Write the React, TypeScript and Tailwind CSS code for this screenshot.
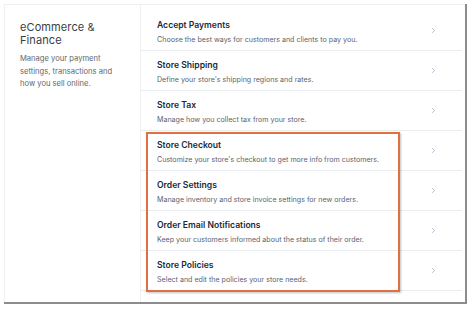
import React from "react";

const rows = [
  ["Accept Payments", "Choose the best ways for customers and clients to pay you."],
  ["Store Shipping", "Define your store's shipping regions and rates."],
  ["Store Tax", "Manage how you collect tax from your store."],
  ["Store Checkout", "Customize your store's checkout to get more info from customers."],
  ["Order Settings", "Manage inventory and store invoice settings for new orders."],
  ["Order Email Notifications", "Keep your customers informed about the status of their order."],
  ["Store Policies", "Select and edit the policies your store needs."],
];

function Chevron() {
  return (
    <svg width="5" height="7" viewBox="0 0 5 7" className="shrink-0">
      <path d="M1.2 1.2 L3.5 3.5 L1.2 5.8" fill="none" stroke="#a9b8c8" strokeWidth="0.9" />
    </svg>
  );
}

export default function App() {
  return (
    <div className="w-[474px] h-[310px] bg-white relative overflow-hidden" style={{ fontFamily: "Inter, 'Noto Sans', sans-serif" }}>
      <div className="absolute left-[4px] top-[4px] w-[463px] h-[300px] bg-white border-r-2 border-b-2 border-[#8c8c8c]">
        <div className="flex h-full border-l border-t border-[#eef1f4]">
          <div className="w-[136px] border-r border-[#eef1f4] pl-[15px] pt-[16px]">
            <div className="text-[11px] leading-[12.5px] text-[#3a3e43] tracking-[0.1px]">eCommerce &amp;<br />Finance</div>
            <div className="mt-[7px] text-[7.6px] leading-[12.5px] text-[#62686e] w-[104px]">
              Manage your payment settings, transactions and how you sell online.
            </div>
          </div>
          <div className="flex-1 pt-[6px] pr-[3px]">
            {rows.map(([t, d]) => (
              <div key={t} className="h-[40px] border-b border-[#e9edf1] flex items-center pl-[16px] pr-[26px]">
                <div className="flex-1 pt-[3px]">
                  <div className="text-[8.6px] leading-[12px] font-semibold text-[#172a3a]">{t}</div>
                  <div className="text-[7.1px] leading-[11px] text-[#5a646e] mt-[3px]">{d}</div>
                </div>
                <Chevron />
              </div>
            ))}
          </div>
        </div>
        <div className="absolute left-[142px] top-[128px] w-[254px] h-[160px] border-2 border-[#e0703f] shadow-[1px_1px_2px_rgba(0,0,0,0.25)]" />
      </div>
    </div>
  );
}
